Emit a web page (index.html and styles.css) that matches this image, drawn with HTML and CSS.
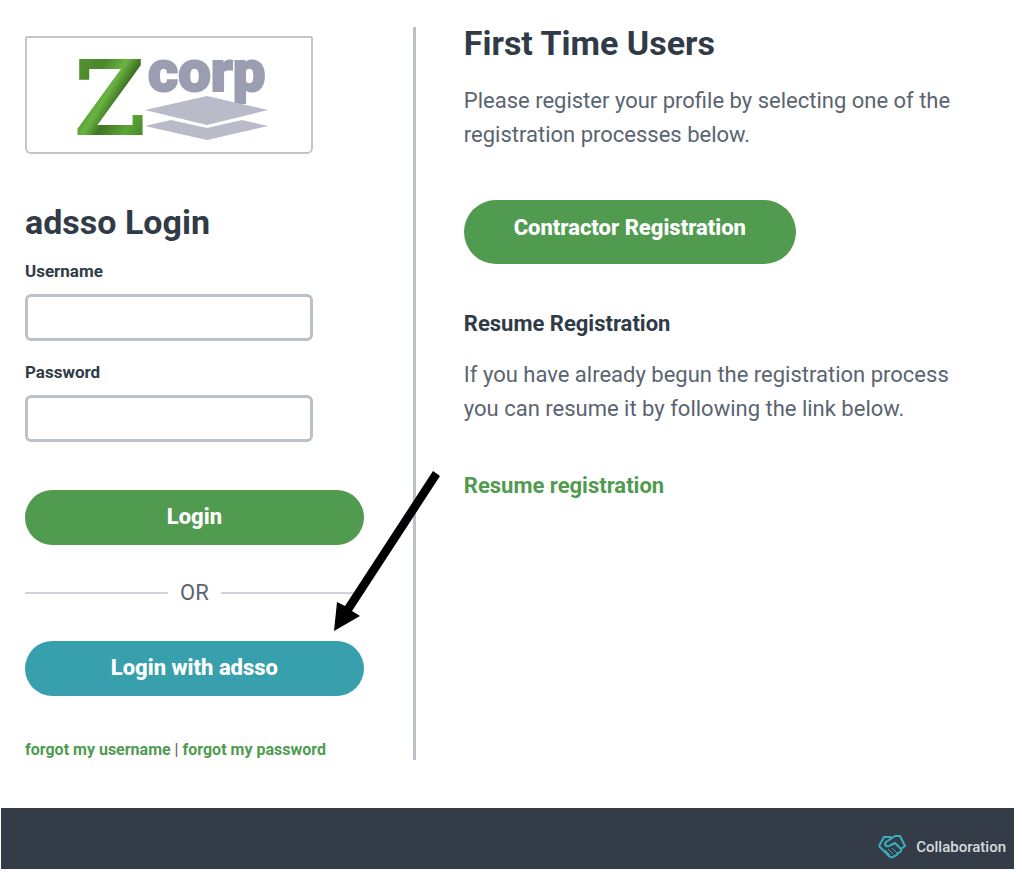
FILE: index.html
```html
<!DOCTYPE html>
<html lang="en">
<head>
<meta charset="utf-8">
<meta name="viewport" content="width=device-width, initial-scale=1">
<title>adsso Login</title>
<link rel="stylesheet" href="styles.css">
</head>
<body>
<main class="page">
  <section class="login">
    <div class="logo">
      <svg class="logo-art" viewBox="0 0 284 114" role="img" aria-label="Zcorp">
        <defs>
          <linearGradient id="leaf" x1="0" y1="0" x2="1" y2="1">
            <stop offset="0" stop-color="#5a9c36"/>
            <stop offset="0.3" stop-color="#4a8529"/>
            <stop offset="0.46" stop-color="#6ab443"/>
            <stop offset="0.56" stop-color="#3f7422"/>
            <stop offset="0.75" stop-color="#5ca436"/>
            <stop offset="1" stop-color="#3c7420"/>
          </linearGradient>
        </defs>
        <text class="logo-z" x="48" y="95" fill="url(#leaf)" stroke="url(#leaf)">Z</text>
        <text class="logo-corp" x="121" y="53">corp</text>
        <path fill="#b9bbc9" d="M118 72 180 58 241 72 180 87Z"/>
        <path fill="#b9bbc9" d="M118 88 144 82 180 90 215 82 241 88 180 102Z"/>
      </svg>
    </div>
    <h1 class="title">adsso Login</h1>
    <form class="form">
      <label class="label" for="username">Username</label>
      <input class="field" id="username" type="text">
      <label class="label" for="password">Password</label>
      <input class="field" id="password" type="password">
      <button class="button" type="submit">Login</button>
      <div class="divider">OR</div>
      <button class="button button-alt" type="button">Login with adsso</button>
    </form>
    <p class="forgot"><a class="link" href="#username">forgot my username</a> | <a class="link" href="#password">forgot my password</a></p>
    <svg class="arrow" viewBox="0 0 108 162" aria-hidden="true">
      <path d="M100 1 107 6 19 141 27 146 1 161 4 132 12 136Z"/>
    </svg>
  </section>
  <section class="register">
    <h2 class="title">First Time Users</h2>
    <p class="text">Please register your profile by selecting one of the registration processes below.</p>
    <button class="button button-large" type="button">Contractor Registration</button>
    <h3 class="subtitle">Resume Registration</h3>
    <p class="text">If you have already begun the registration process you can resume it by following the link below.</p>
    <a class="link link-large" href="#resume">Resume registration</a>
  </section>
</main>
<footer class="footer">
  <svg class="hands" viewBox="0 0 28 24" aria-hidden="true">
    <path d="M1 11 6 2H12L14 3 17 1H22L27 11 23 14"/>
    <path d="M14 3 8 7Q6 9 8 11 10 12 13 10L17 8 23 14Q24 17 20 18 19 21 16 21 14 24 11 21L4 14 1 11"/>
    <path d="M7 15 12 20M10 14 15 19M14 13 19 18" stroke-width="1"/>
  </svg>
  <span>Collaboration</span>
</footer>
</body>
</html>
```
FILE: styles.css
```css
* { box-sizing: border-box; }

body {
  margin: 0;
  background: #fff;
  color: #5a6470;
  font-family: Roboto, "Liberation Sans", sans-serif;
  font-size: 22px;
  font-weight: 400;
}

.page {
  display: grid;
  grid-template-columns: 2fr 3fr;
  padding: 27px 20px 48px 25px;
}

.login {
  position: relative;
  padding: 9px 49px 0 0;
  border-right: 3px solid #bcc0c8;
}

.logo {
  width: 85%;
  border: 2px solid #c5c5c5;
  border-radius: 2px 2px 6px 6px;
}

.logo-art { display: block; width: 100%; overflow: visible; }

.logo-z {
  font-family: "DejaVu Serif", serif;
  font-size: 100px;
  stroke-width: 4px;
}

.logo-corp {
  fill: #9b9db1;
  font-family: Roboto, sans-serif;
  font-size: 58px;
  font-weight: 900;
  stroke: #9b9db1;
  stroke-width: 2px;
}

.title {
  margin: 0;
  color: #303b47;
  font-size: 34px;
  font-weight: 700;
  line-height: 32px;
}

.login .title { margin: 52px 0 2px; }

.form { display: flex; flex-direction: column; align-items: flex-start; }

.label {
  margin: 20px 0 12px;
  color: #303b47;
  font-size: 17px;
  font-weight: 700;
  line-height: 22px;
}

.field {
  width: 85%;
  height: 47px;
  padding: 0 12px;
  border: 3px solid #bcc0c8;
  border-radius: 6px;
  background: #fff;
  font: inherit;
}

.button {
  width: 100%;
  height: 55px;
  padding: 0 24px;
  border: 0;
  border-radius: 32px;
  background: #509b50;
  color: #fff;
  font: 800 22px/28px Roboto, "Liberation Sans", sans-serif;
}

.form .button[type="submit"] { margin-top: 48px; }

.button-alt { background: #38a0ad; }

.divider {
  display: flex;
  align-items: center;
  gap: 12px;
  width: 100%;
  margin: 32px 0;
  line-height: 32px;
}

.divider::before,
.divider::after {
  content: "";
  flex: 1;
  height: 2px;
  background: #d0d3d9;
}

.forgot { margin: 44px 0 0; font-size: 16px; line-height: 20px; }

.link { color: #509b50; font-weight: 700; text-decoration: none; }

.arrow {
  position: absolute;
  top: 443px;
  right: -28px;
  width: 108px;
  height: 162px;
}

.register { padding: 0 32px 0 48px; }

.text { margin: 25px 0 0; line-height: 34px; }

.button-large {
  width: 332px;
  height: 64px;
  margin-top: 48px;
  padding-bottom: 8px;
}

.subtitle {
  margin: 44px 0 0;
  color: #303b47;
  font-size: 22px;
  font-weight: 700;
  line-height: 32px;
}

.subtitle + .text { margin-top: 18px; }

.link-large { display: inline-block; margin-top: 44px; line-height: 32px; }

.footer {
  display: flex;
  justify-content: flex-end;
  align-items: center;
  gap: 10px;
  margin: 0 8px 0 1px;
  padding: 26px 8px 8px;
  background: #343d47;
  color: #d8dbdf;
  font-size: 15px;
  font-weight: 500;
  line-height: 27px;
}

.hands {
  width: 28px;
  height: 24px;
  fill: none;
  stroke: #38b0bf;
  stroke-width: 2;
  stroke-linejoin: round;
}
```
